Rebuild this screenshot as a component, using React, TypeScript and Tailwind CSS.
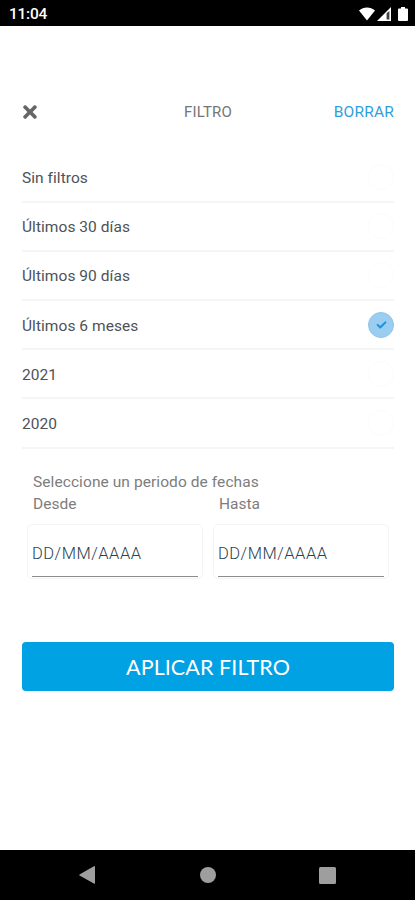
import { useState } from "react";
import { FaCheck, FaTimes } from "react-icons/fa";

const OPTIONS = [
  { id: "none", label: "Sin filtros" },
  { id: "30d", label: "Últimos 30 días" },
  { id: "90d", label: "Últimos 90 días" },
  { id: "6m", label: "Últimos 6 meses" },
  { id: "2021", label: "2021" },
  { id: "2020", label: "2020" },
];

function StatusBar() {
  return (
    <div className="flex h-[25.5px] shrink-0 items-center justify-between bg-black pl-[9px] pr-[7px] pt-[2px] text-white">
      <span className="pt-[2px] text-[15.5px] font-medium leading-none tracking-[-0.25px]">11:04</span>
      <div className="flex items-center gap-[2px]">
        <svg className="h-[14px] w-4" viewBox="0 0 16 14" fill="currentColor">
          <path d="M0 3.6C4.6-.4 11.4-.4 16 3.6L8 13.6z" />
        </svg>
        <svg className="h-[14px] w-[14px]" viewBox="0 0 14 14">
          <path d="M0 14L14 0v14z" fill="currentColor" />
          <path d="M9.6 6.2L12.4 4v8.6H9.6z" fill="#000" fillOpacity=".75" />
        </svg>
        <svg className="ml-[5px] h-[14px] w-[10px]" viewBox="0 0 10 14" fill="currentColor">
          <path d="M3 0h4v1.6h2q1 0 1 1V13q0 1-1 1H1q-1 0-1-1V2.6q0-1 1-1h2z" />
        </svg>
      </div>
    </div>
  );
}

function DateField({ label }: { label: string }) {
  return (
    <label className="block w-[176px]">
      <span className="block pl-[6px] text-[15.5px] leading-[22px] text-[#7d7d7d]">{label}</span>
      <div className="mt-[9.5px] h-[55px] rounded-[5px] border border-[#f4f4f4] px-[4px] pt-[2px]">
        <input
          placeholder="DD/MM/AAAA"
          className="block h-[50px] w-full border-b border-[#8c8c8c] pt-[3px] text-[16.5px] font-light tracking-[0.5px] text-[#2c4250] outline-none placeholder:text-[#2c4250]"
        />
      </div>
    </label>
  );
}

function NavBar() {
  return (
    <div className="flex h-[50px] shrink-0 items-center bg-black pl-[79px] text-[#9e9e9e]">
      <svg className="h-[18px] w-4" viewBox="0 0 16 18" fill="currentColor">
        <path d="M15.3 0Q16 0 16 .7V17.3Q16 18 15.3 17.7L.5 9.5Q0 9 .5 8.5z" />
      </svg>
      <div className="ml-[105px] h-4 w-4 rounded-full bg-[#9e9e9e]" />
      <div className="ml-[103px] h-[17px] w-[17px] rounded-[1.5px] bg-[#9e9e9e]" />
    </div>
  );
}

export default function App() {
  const [selected, setSelected] = useState("6m");

  return (
    <div className="flex h-[900px] w-[415px] flex-col overflow-hidden bg-white font-[Roboto,sans-serif]">
      <StatusBar />

      <main className="flex flex-1 flex-col pl-[22px] pr-[21px]">
        <header className="mt-[74px] grid h-6 grid-cols-3 items-center pt-px text-[15px]">
          <button aria-label="Cerrar" className="pl-px">
            <FaTimes className="h-[20px] w-[14px] text-[#666]" />
          </button>
          <h1 className="text-center tracking-[0.15px] text-[#757575]">FILTRO</h1>
          <button className="text-right text-[15.5px] tracking-[0.2px] text-[#2f9fdd]">BORRAR</button>
        </header>

        <ul className="mt-[30px]">
          {OPTIONS.map((option) => (
            <li key={option.id} className="h-[49.2px] border-b-2 border-[#f4f5f5]">
              <button
                onClick={() => setSelected(option.id)}
                className="flex h-full w-full items-center justify-between text-left text-[15.5px] tracking-[0.05px] text-[#4d5257]"
              >
                <span className="pt-[3px]">{option.label}</span>
                {selected === option.id ? (
                  <span className="flex h-[26px] w-[26px] items-center justify-center rounded-full border border-[#8ec5ea] bg-[#9acdef]">
                    <FaCheck className="h-[10px] w-[11px] text-[#1b93d8]" />
                  </span>
                ) : (
                  <span className="h-[26px] w-[26px] rounded-full border border-[#fcfcfc]" />
                )}
              </button>
            </li>
          ))}
        </ul>

        <section className="mt-[22px] pl-[5px]">
          <p className="pl-[6px] text-[15.5px] leading-[22px] tracking-[0.08px] text-[#7d7d7d]">
            Seleccione un periodo de fechas
          </p>
          <div className="flex gap-[10px]">
            <DateField label="Desde" />
            <DateField label="Hasta" />
          </div>
        </section>

        <button className="mt-[62.5px] h-[49.5px] rounded-[4px] bg-[#00a2e3] pt-[2px] font-[Lato,sans-serif] text-[21.5px] tracking-[0.08px] text-white">
          APLICAR FILTRO
        </button>
      </main>

      <NavBar />
    </div>
  );
}
